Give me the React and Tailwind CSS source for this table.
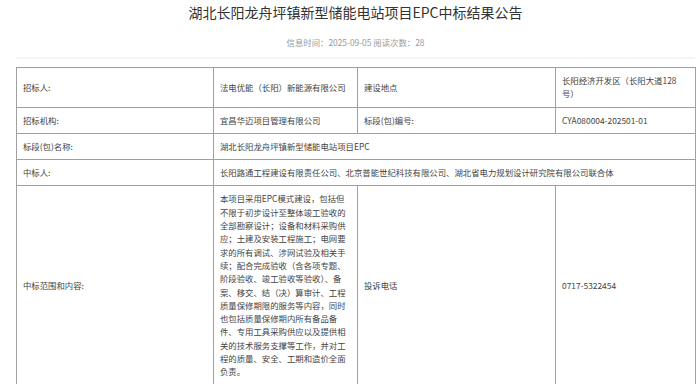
import React from 'react';

const cell = "border border-[#a0a0a0] px-[6px] py-[6px] align-middle text-left font-normal";

function App() {
    return (
        <div className="w-[700px] h-[384px] overflow-hidden bg-white text-[#333] font-['Microsoft_YaHei','Noto_Sans_CJK_SC',sans-serif]">
            <div className="ml-[16px] w-[679px]">
                {/* title */}
                <h1 className="pt-[2px] text-center text-[14px] leading-[20px] text-[#333] font-normal">
                    湖北长阳龙舟坪镇新型储能电站项目EPC中标结果公告
                </h1>
                <p className="mt-[14px] text-center text-[8.4px] leading-[12px] text-[#999]">
                    信息时间：2025-09-05 阅读次数：28
                </p>
                <div className="mt-[9px] h-[2px] bg-[#f5f5f5]" />

                {/* table */}
                <table className="mt-[8px] w-[679px] table-fixed border-collapse text-[8.4px] leading-[13.3px] text-[#444]">
                    <colgroup>
                        <col className="w-[197px]" />
                        <col className="w-[144px]" />
                        <col className="w-[198px]" />
                        <col className="w-[140px]" />
                    </colgroup>
                    <tbody>
                        <tr>
                            <td className={cell}>招标人:</td>
                            <td className={cell}>法电优能（长阳）新能源有限公司</td>
                            <td className={cell}>建设地点</td>
                            <td className={cell}>长阳经济开发区（长阳大道128<br />号）</td>
                        </tr>
                        <tr>
                            <td className={cell}>招标机构:</td>
                            <td className={cell}>宜昌华迈项目管理有限公司</td>
                            <td className={cell}>标段(包)编号:</td>
                            <td className={cell}>CYA080004-202501-01</td>
                        </tr>
                        <tr>
                            <td className={cell}>标段(包)名称:</td>
                            <td className={cell} colSpan={3}>湖北长阳龙舟坪镇新型储能电站项目EPC</td>
                        </tr>
                        <tr>
                            <td className={cell}>中标人:</td>
                            <td className={cell} colSpan={3}>长阳路通工程建设有限责任公司、北京普能世纪科技有限公司、湖北省电力规划设计研究院有限公司联合体</td>
                        </tr>
                        <tr>
                            <td className={cell}>中标范围和内容:</td>
                            <td className={cell}>
                                本项目采用EPC模式建设，包括但不限于初步设计至整体竣工验收的全部勘察设计；设备和材料采购供应；土建及安装工程施工；电网要求的所有调试、涉网试验及相关手续；配合完成验收（含各项专题、阶段验收、竣工验收等验收）、备案、移交、结（决）算审计、工程质量保修期限的服务等内容，同时也包括质量保修期内所有备品备件、专用工具采购供应以及提供相关的技术服务支撑等工作，并对工程的质量、安全、工期和造价全面负责。
                            </td>
                            <td className={cell}>投诉电话</td>
                            <td className={cell}>0717-5322454</td>
                        </tr>
                        <tr>
                            <td className={cell}>&nbsp;</td>
                            <td className={cell}>&nbsp;</td>
                            <td className={cell}>&nbsp;</td>
                            <td className={cell}>&nbsp;</td>
                        </tr>
                    </tbody>
                </table>
            </div>
        </div>
    )
}

export default App
